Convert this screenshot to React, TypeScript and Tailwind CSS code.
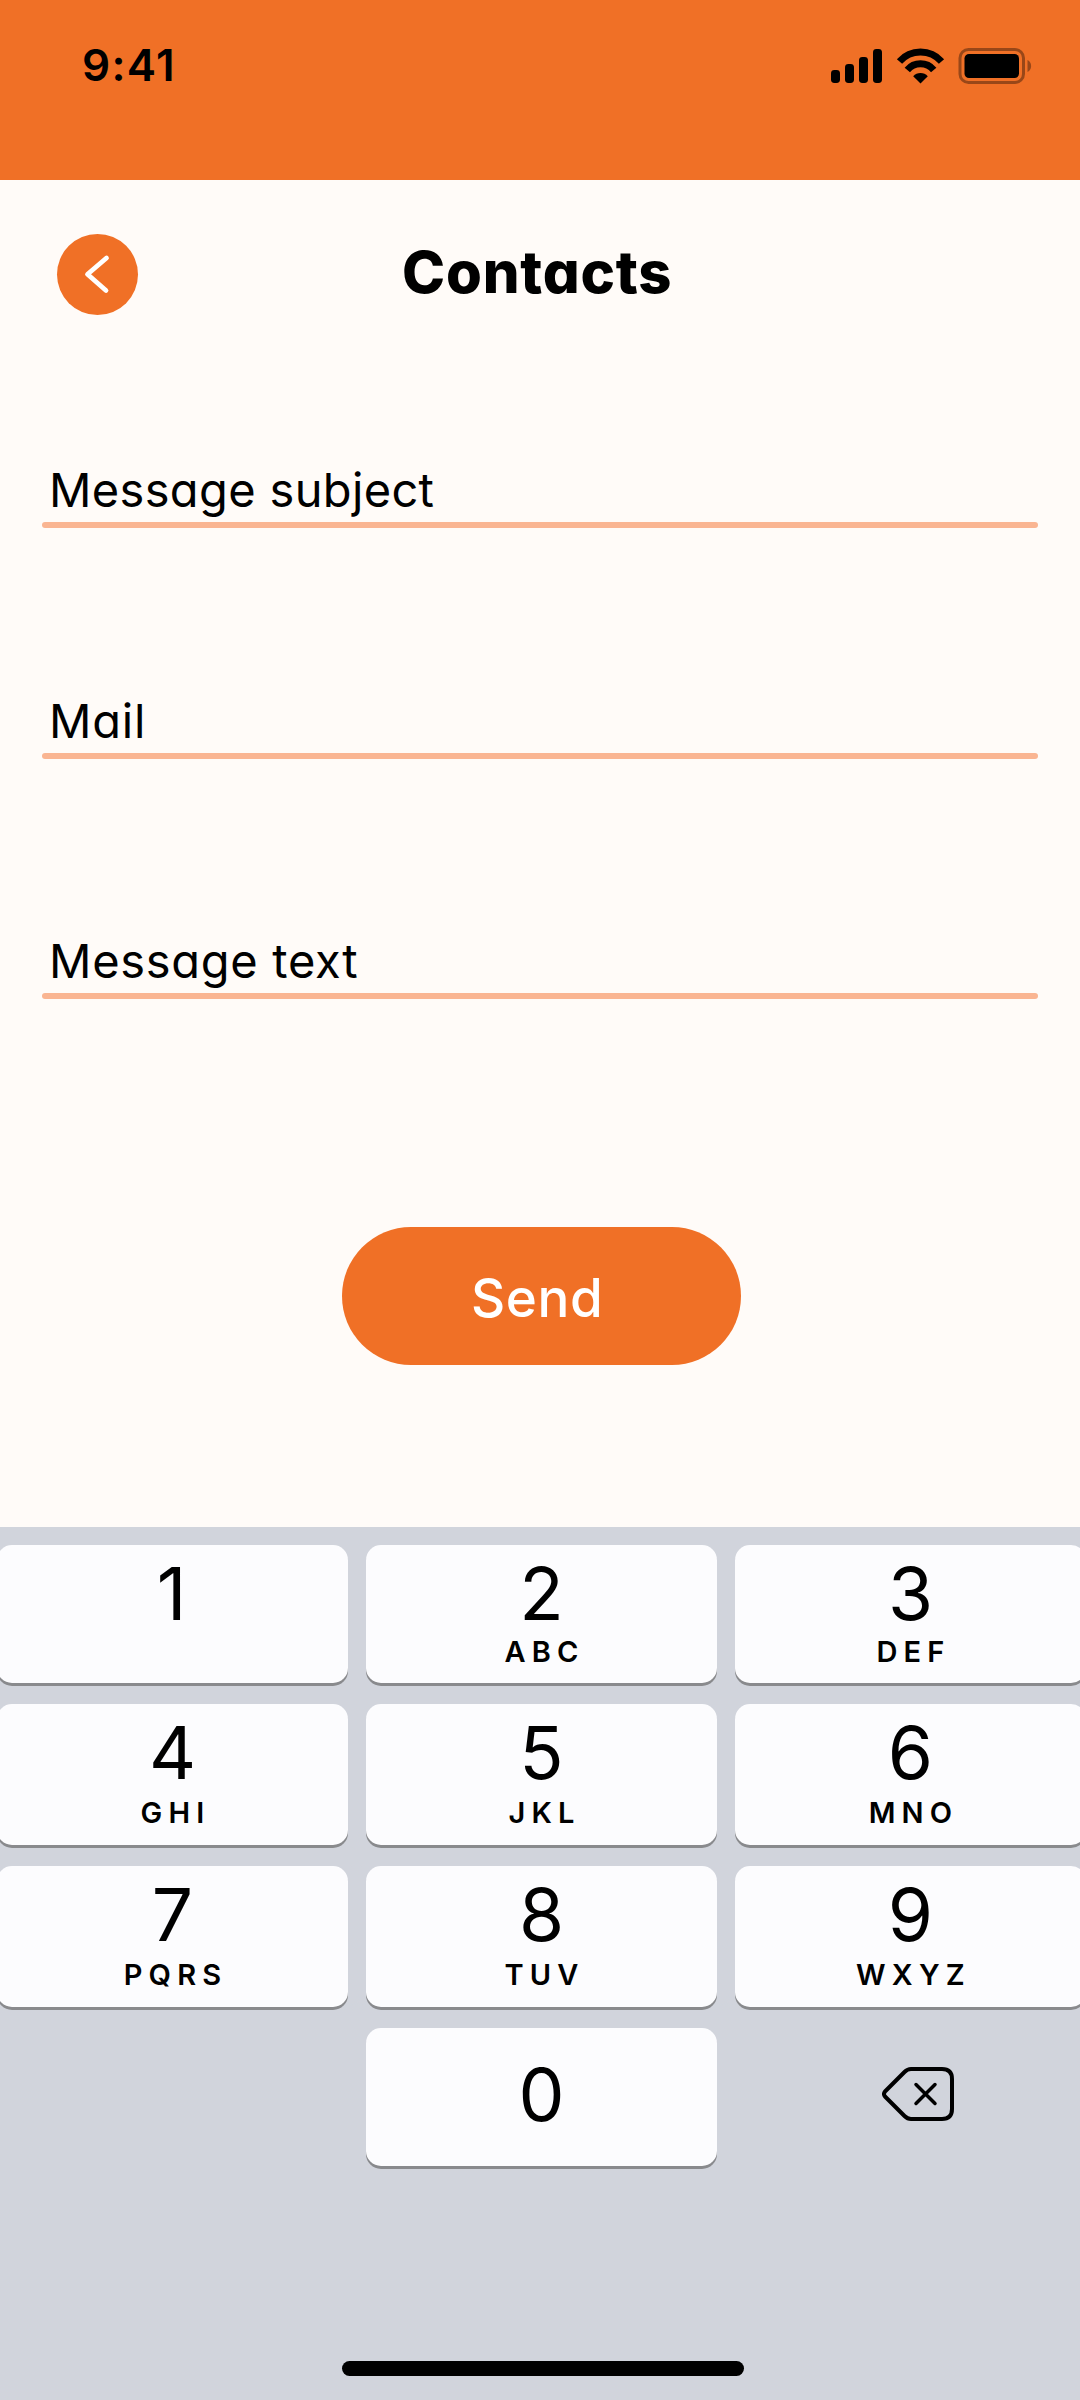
import React from "react";
import clsx from "clsx";

const keys = [
  { digit: "1", letters: "", tall: false },
  { digit: "2", letters: "ABC", tall: false },
  { digit: "3", letters: "DEF", tall: false },
  { digit: "4", letters: "GHI", tall: true },
  { digit: "5", letters: "JKL", tall: true },
  { digit: "6", letters: "MNO", tall: true },
  { digit: "7", letters: "PQRS", tall: true },
  { digit: "8", letters: "TUV", tall: true },
  { digit: "9", letters: "WXYZ", tall: true },
];

function StatusIcons() {
  return (
    <svg width="204" height="38" viewBox="830 46 204 38" className="block">
      <rect x="831" y="70" width="9" height="13" rx="3.4" />
      <rect x="845" y="64" width="9" height="19" rx="3.4" />
      <rect x="859" y="57" width="9" height="26" rx="3.4" />
      <rect x="873" y="49" width="9" height="34" rx="3.4" />
      <g fill="none" stroke="#000" strokeWidth="7">
        <path d="M899.5 61.5a28 28 0 0 1 42 0" />
        <path d="M907.3 69.9a17.2 17.2 0 0 1 26.4 0" />
      </g>
      <path d="M913.2 76.2a9.700 9.700 0 0 1 14.600 0l-7.300 7.400z" />
      <rect x="960" y="49.5" width="63.5" height="33" rx="8.5" fill="none" stroke="#000" strokeOpacity="0.36" strokeWidth="3" />
      <rect x="964.5" y="54" width="54.5" height="24" rx="4.5" />
      <path d="M1027.5 60a6.8 6.8 0 0 1 0 12z" fillOpacity="0.36" />
    </svg>
  );
}

function Field({ label, className }: { label: string; className?: string }) {
  return (
    <label className="block">
      <span className={clsx("block h-16 pl-[7px] text-[47px] leading-[64px] whitespace-nowrap", className)}>{label}</span>
      <span className="block h-1.5 rounded-full bg-[#fab592]" />
    </label>
  );
}

function Key({ digit, letters, tall }: { digit: string; letters: string; tall: boolean }) {
  return (
    <button
      className={clsx(
        "flex flex-col items-center rounded-[15px] bg-[#fcfcfe] shadow-[0_3px_0_#898a8d]",
        tall ? "h-[141px]" : "h-[138px]",
      )}
    >
      <span className={clsx("mt-[9px] h-20 text-[73px] leading-[80px]", digit === "1" && "pr-[2px]")}>{digit}</span>
      <span
        className={clsx(
          "h-8 pl-[6px] text-[29px] leading-[32px] font-semibold tracking-[6.2px]",
          tall ? "mt-[4px]" : "mt-[2px]",
        )}
      >
        {letters}
      </span>
    </button>
  );
}

export default function App() {
  return (
    <div className="flex h-[2400px] w-[1080px] flex-col overflow-hidden bg-[#fffbf8] font-[Inter,sans-serif] text-black">
      <header className="h-[180px] bg-[#f07026]">
        <div className="flex h-[130px] items-center justify-between pr-[46px] pl-[82px]">
          <span className="text-[44px] leading-[52px] font-semibold tracking-[1.3px]">9:41</span>
          <StatusIcons />
        </div>
      </header>

      <main className="flex h-[1347px] flex-col [font-feature-settings:'cv11']">
        <div className="mt-[54px] flex h-[81px] items-center pl-[57px]">
          <button className="flex size-[81px] items-center justify-center rounded-full bg-[#f07026]">
            <svg width="81" height="81" viewBox="0 0 81 81" fill="none" stroke="#fff" strokeWidth="4.8" strokeLinecap="round" strokeLinejoin="round">
              <path d="M49.500 24 30.500 40.300 49 56.500" />
            </svg>
          </button>
          <h1 className="mb-[6px] ml-[264px] text-[58px] leading-[72px] font-extrabold tracking-[0.8px] whitespace-nowrap">Contacts</h1>
        </div>

        <form className="mt-[143px] flex flex-col px-[42px]">
          <Field label="Message subject" className="tracking-[0.35px]" />
          <div className="h-[161px]" />
          <Field label="Mail" className="tracking-[0.8px]" />
          <div className="h-[170px]" />
          <Field label="Message text" className="tracking-[0.7px]" />
          <button
            type="button"
            className="mt-[228px] ml-[300px] flex h-[138px] w-[399px] items-center rounded-full bg-[#f07026] pt-[4px] pl-[129px] text-[53px] leading-none font-medium tracking-[0.6px] text-white"
          >
            Send
          </button>
        </form>
      </main>

      <section className="flex h-[873px] flex-col bg-[#d1d4dc]">
        <div className="-mx-[3px] mt-[18px] grid w-[1089px] shrink-0 grid-cols-[351px_351px_351px] gap-x-[18px] gap-y-[21px]">
          {keys.map((k) => (
            <Key key={k.digit} {...k} />
          ))}
          <span />
          <button className="flex h-[138px] items-center justify-center rounded-[15px] bg-[#fcfcfe] text-[73px] leading-[80px] shadow-[0_3px_0_#898a8d]">
            <span className="mt-[-5px]">0</span>
          </button>
          <button className="flex h-[138px] pt-[39px] pl-[147px]">
            <svg width="72" height="54" viewBox="0 0 72 54" fill="none" stroke="#000" strokeWidth="4" strokeLinecap="round" strokeLinejoin="round">
              <path d="M29 2H60Q70 2 70 12V42Q70 52 60 52H29Q25.500 52 22.500 49L3 29.500Q1 27 3 24.500L22.500 5Q25.500 2 29 2Z" />
              <path d="M34 17.500 53 36.500M53 17.500 34 36.500" strokeWidth="3.500" />
            </svg>
          </button>
        </div>
        <div className="mt-[195px] ml-[342px] h-[15px] w-[402px] rounded-full bg-black" />
      </section>
    </div>
  );
}
